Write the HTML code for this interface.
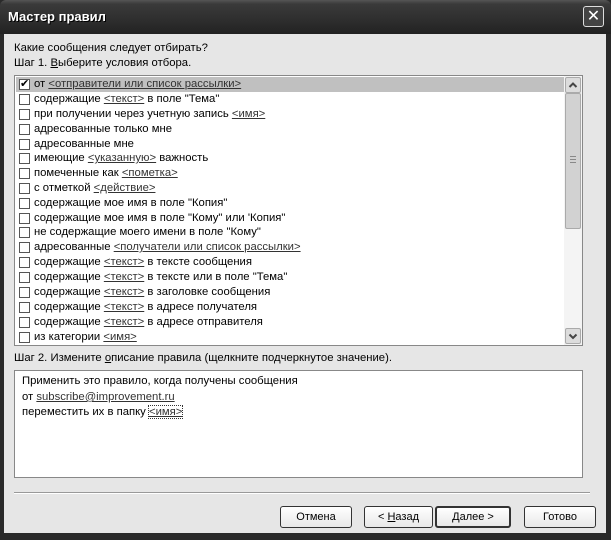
<!DOCTYPE html>
<html><head><meta charset="utf-8"><style>
*{margin:0;padding:0;box-sizing:border-box}
body{width:611px;height:540px;background:#2a2a2a;position:relative;overflow:hidden;font-family:"Liberation Sans","DejaVu Sans",sans-serif;font-size:11.3px;color:#000}
.title{position:absolute;left:0;top:0;width:611px;height:34px;background:linear-gradient(#555 0,#3a3a3a 4px,#2e2e2e 20px,#222 34px);border-radius:6px 6px 0 0}
.title span{position:absolute;left:8px;top:9px;color:#fff;font-weight:bold;font-size:13px;text-shadow:1px 1px #000}
.close{position:absolute;left:583px;top:6px;width:21px;height:21px;border:1px solid #ddd;border-radius:3px;background:#444;color:#fff;font-size:16px;font-weight:bold;text-align:center;line-height:19px}
.body{position:absolute;left:4px;top:34px;width:602px;height:499px;background:#e6e6e6}
.t{position:absolute;white-space:nowrap}
.list{position:absolute;left:14px;top:75px;width:569px;height:271px;border:1px solid #888;background:#fff;overflow:hidden}
.row{position:absolute;left:1px;height:15px;width:548px;white-space:nowrap;line-height:15px}
.row.sel{background:#c0c0c0}
.cb{position:absolute;left:3px;top:2px;width:11px;height:11px;border:1px solid #555;background:#fff}
.row .tx{position:absolute;left:18px;top:0}
u{text-decoration:underline}
.lk{color:#333;text-decoration:underline}
.sb{position:absolute;left:549px;top:0;width:18px;height:269px;background:#f4f4f4}
.sbb{position:absolute;left:1px;width:16px;height:16px;border:1px solid #aaa;border-radius:2px;background:#dcdcdc}
.thumb{position:absolute;left:1px;top:17px;width:16px;height:136px;border:1px solid #aaa;border-radius:2px;background:#d2d2d2}
.desc{position:absolute;left:14px;top:370px;width:569px;height:108px;border:1px solid #888;background:#fff}
.btn{position:absolute;top:506px;height:22px;border:1px solid #333;border-radius:3px;background:linear-gradient(#fff,#e8e8e8);text-align:center;line-height:20px;font-size:11px}
</style></head><body>
<div class="title"><span>Мастер правил</span><div class="close">✕</div></div>
<div class="body"></div>
<div class="t" style="left:14px;top:42px">Какие сообщения следует отбирать?</div>
<div class="t" style="left:14px;top:57px">Шаг 1. <u>В</u>ыберите условия отбора.</div>
<div class="list">
<div class="row sel" style="top:1px"><div class="cb" style="font-size:11px;line-height:9px;font-weight:bold;text-align:center">✔</div><span class="tx">от <span class="lk">&lt;отправители или список рассылки&gt;</span></span></div>
<div class="row" style="top:16px"><div class="cb"></div><span class="tx">содержащие <span class="lk">&lt;текст&gt;</span> в поле "Тема"</span></div>
<div class="row" style="top:31px"><div class="cb"></div><span class="tx">при получении через учетную запись <span class="lk">&lt;имя&gt;</span></span></div>
<div class="row" style="top:46px"><div class="cb"></div><span class="tx">адресованные только мне</span></div>
<div class="row" style="top:61px"><div class="cb"></div><span class="tx">адресованные мне</span></div>
<div class="row" style="top:75px"><div class="cb"></div><span class="tx">имеющие <span class="lk">&lt;указанную&gt;</span> важность</span></div>
<div class="row" style="top:90px"><div class="cb"></div><span class="tx">помеченные как <span class="lk">&lt;пометка&gt;</span></span></div>
<div class="row" style="top:105px"><div class="cb"></div><span class="tx">с отметкой <span class="lk">&lt;действие&gt;</span></span></div>
<div class="row" style="top:120px"><div class="cb"></div><span class="tx">содержащие мое имя в поле "Копия"</span></div>
<div class="row" style="top:135px"><div class="cb"></div><span class="tx">содержащие мое имя в поле "Кому" или 'Копия"</span></div>
<div class="row" style="top:149px"><div class="cb"></div><span class="tx">не содержащие моего имени в поле "Кому"</span></div>
<div class="row" style="top:164px"><div class="cb"></div><span class="tx">адресованные <span class="lk">&lt;получатели или список рассылки&gt;</span></span></div>
<div class="row" style="top:179px"><div class="cb"></div><span class="tx">содержащие <span class="lk">&lt;текст&gt;</span> в тексте сообщения</span></div>
<div class="row" style="top:194px"><div class="cb"></div><span class="tx">содержащие <span class="lk">&lt;текст&gt;</span> в тексте или в поле "Тема"</span></div>
<div class="row" style="top:209px"><div class="cb"></div><span class="tx">содержащие <span class="lk">&lt;текст&gt;</span> в заголовке сообщения</span></div>
<div class="row" style="top:224px"><div class="cb"></div><span class="tx">содержащие <span class="lk">&lt;текст&gt;</span> в адресе получателя</span></div>
<div class="row" style="top:239px"><div class="cb"></div><span class="tx">содержащие <span class="lk">&lt;текст&gt;</span> в адресе отправителя</span></div>
<div class="row" style="top:254px"><div class="cb"></div><span class="tx">из категории <span class="lk">&lt;имя&gt;</span></span></div>
<div class="sb">
<div class="sbb" style="top:1px"><svg width="14" height="14"><path d="M3.5 9 L7 5.5 L10.5 9" stroke="#444" stroke-width="2" fill="none"/></svg></div>
<div class="thumb"><div style="position:absolute;left:4px;top:62px;width:6px;height:7px;border-top:1px solid #888;border-bottom:1px solid #888;"><div style="margin-top:2px;border-top:1px solid #888"></div></div></div>
<div class="sbb" style="top:252px"><svg width="14" height="14"><path d="M3.5 5.5 L7 9 L10.5 5.5" stroke="#444" stroke-width="2" fill="none"/></svg></div>
</div>
</div>
<div class="t" style="left:14px;top:352px">Шаг 2. Измените <u>о</u>писание правила (щелкните подчеркнутое значение).</div>
<div class="desc">
<div class="t" style="left:7px;top:4px">Применить это правило, когда получены сообщения</div>
<div class="t" style="left:7px;top:20px">от <span class="lk">subscribe@improvement.ru</span></div>
<div class="t" style="left:7px;top:35px">переместить их в папку <span class="lk" style="outline:1px dotted #333">&lt;имя&gt;</span></div>
</div>
<div style="position:absolute;left:14px;top:492px;width:576px;height:2px;border-top:1px solid #999;border-bottom:1px solid #fff"></div>
<div class="btn" style="left:280px;width:72px">Отмена</div>
<div class="btn" style="left:364px;width:69px">&lt; <u>Н</u>азад</div>
<div class="btn" style="left:435px;width:76px;border-width:2px;line-height:18px"><u>Д</u>алее &gt;</div>
<div class="btn" style="left:524px;width:72px">Готово</div>
</body></html>
